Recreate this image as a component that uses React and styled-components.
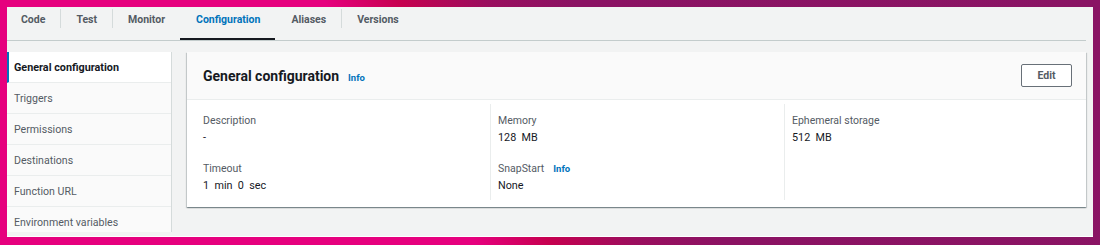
import React from "react";
import styled, { createGlobalStyle } from "styled-components";

const GlobalStyle = createGlobalStyle`
  html, body { margin: 0; padding: 0; }
  body {
    font-family: Roboto, "Liberation Sans", Arial, sans-serif;
    -webkit-font-smoothing: antialiased;
  }
  * { box-sizing: border-box; }
`;

const Frame = styled.div`
  width: 1100px;
  height: 245px;
  padding: 7px 7px 8px 7px;
  background: linear-gradient(58deg, #e6007e 0%, #e6007e 38%, #c6004f 44%, #9a0e5e 51%, #8b1263 58%, #8a1464 100%);
`;

const Screen = styled.div`
  height: 230px;
  background: #f2f3f3;
  padding-right: 7px;
  border-bottom: 1px solid #ffffff;
  overflow: hidden;
`;

const TabBar = styled.nav`
  display: flex;
  border-bottom: 1px solid #c3cccc;
`;

const Tab = styled.div`
  position: relative;
  padding: 4px 15px 10px 16px;
  line-height: 17px;
  font-size: 10.5px;
  font-weight: 700;
  color: ${(p) => (p.$active ? "#0073bb" : "#545b64")};
  border-bottom: 2px solid ${(p) => (p.$active ? "#16191f" : "transparent")};
  &:first-child { padding-left: 14px; }
  & + &::before {
    content: "";
    position: absolute;
    left: 0;
    top: 2px;
    bottom: 10px;
    width: 1px;
    background: #d5dbdb;
  }
`;

const Main = styled.div`
  display: flex;
  align-items: flex-start;
  gap: 15px;
  padding-top: 11px;
`;

const Sidebar = styled.ul`
  list-style: none;
  margin: 0;
  padding: 0;
  width: 165px;
  height: 180px;
  flex-shrink: 0;
  overflow: hidden;
  background: #ffffff;
  border-right: 1px solid #d5dbdb;
`;

const SideItem = styled.li`
  display: flex;
  align-items: center;
  height: 31px;
  padding-left: ${(p) => (p.$active ? "5px" : "7px")};
  border-left: ${(p) => (p.$active ? "2px solid #0073bb" : "0")};
  border-bottom: 1px solid #eaeded;
  background: ${(p) => (p.$active ? "#ffffff" : "#fafafa")};
  font-size: ${(p) => (p.$active ? "10.8px" : "10.6px")};
  font-weight: ${(p) => (p.$active ? 700 : 400)};
  color: ${(p) => (p.$active ? "#16191f" : "#545b64")};
`;

const Card = styled.section`
  flex: 1;
  background: #ffffff;
  box-shadow: 0 1px 1px 0 rgba(0, 28, 36, 0.3), 1px 1px 1px 0 rgba(0, 28, 36, 0.15),
    -1px 1px 1px 0 rgba(0, 28, 36, 0.15);
`;

const CardHeader = styled.header`
  display: flex;
  align-items: center;
  justify-content: space-between;
  padding: 12px 14px 12px 16px;
  background: #fafafa;
  border-bottom: 1px solid #eaeded;
`;

const TitleRow = styled.div`
  display: flex;
  align-items: baseline;
`;

const Title = styled.h2`
  margin: 0;
  font-size: 14px;
  line-height: 20px;
  font-weight: 700;
  color: #16191f;
`;

const InfoLink = styled.a`
  margin-left: ${(p) => p.$gap || "9px"};
  font-size: 9.5px;
  font-weight: 700;
  color: #0073bb;
  text-decoration: none;
`;

const EditButton = styled.button`
  width: 51px;
  height: 23px;
  padding: 0;
  background: #ffffff;
  border: 1px solid #687078;
  border-radius: 2px;
  font-family: inherit;
  font-size: 10.5px;
  font-weight: 700;
  color: #545b64;
`;

const CardBody = styled.div`
  display: grid;
  grid-template-columns: 287px 294px 1fr;
  padding: 4px 16px 7px 16px;
`;

const Column = styled.div`
  padding: 8px 0 6px ${(p) => (p.$divided ? "7px" : "0")};
  border-left: ${(p) => (p.$divided ? "1px solid #eaeded" : "0")};
  min-height: 96px;
`;

const Field = styled.div`
  & + & { margin-top: 14px; }
`;

const Label = styled.div`
  display: flex;
  align-items: baseline;
  font-size: 10.5px;
  line-height: 17px;
  color: #545b64;
`;

const Value = styled.div`
  font-size: 10.8px;
  line-height: 17px;
  color: #16191f;
  white-space: pre;
`;

const tabs = ["Code", "Test", "Monitor", "Configuration", "Aliases", "Versions"];
const sideItems = [
  "General configuration",
  "Triggers",
  "Permissions",
  "Destinations",
  "Function URL",
  "Environment variables",
];

const columns = [
  [
    { label: "Description", value: "-" },
    { label: "Timeout", value: "1  min  0  sec" },
  ],
  [
    { label: "Memory", value: "128  MB" },
    { label: "SnapStart", value: "None", info: true },
  ],
  [{ label: "Ephemeral storage", value: "512  MB" }],
];

export default function App() {
  return (
    <>
      <GlobalStyle />
      <Frame>
        <Screen>
          <TabBar>
            {tabs.map((t) => (
              <Tab key={t} $active={t === "Configuration"}>
                {t}
              </Tab>
            ))}
          </TabBar>
          <Main>
            <Sidebar>
              {sideItems.map((s, i) => (
                <SideItem key={s} $active={i === 0}>
                  {s}
                </SideItem>
              ))}
            </Sidebar>
            <Card>
              <CardHeader>
                <TitleRow>
                  <Title>General configuration</Title>
                  <InfoLink href="#">Info</InfoLink>
                </TitleRow>
                <EditButton>Edit</EditButton>
              </CardHeader>
              <CardBody>
                {columns.map((col, ci) => (
                  <Column key={ci} $divided={ci > 0}>
                    {col.map((f) => (
                      <Field key={f.label}>
                        <Label>
                          {f.label}
                          {f.info && <InfoLink href="#" $gap="9px">Info</InfoLink>}
                        </Label>
                        <Value>{f.value}</Value>
                      </Field>
                    ))}
                  </Column>
                ))}
              </CardBody>
            </Card>
          </Main>
        </Screen>
      </Frame>
    </>
  );
}
